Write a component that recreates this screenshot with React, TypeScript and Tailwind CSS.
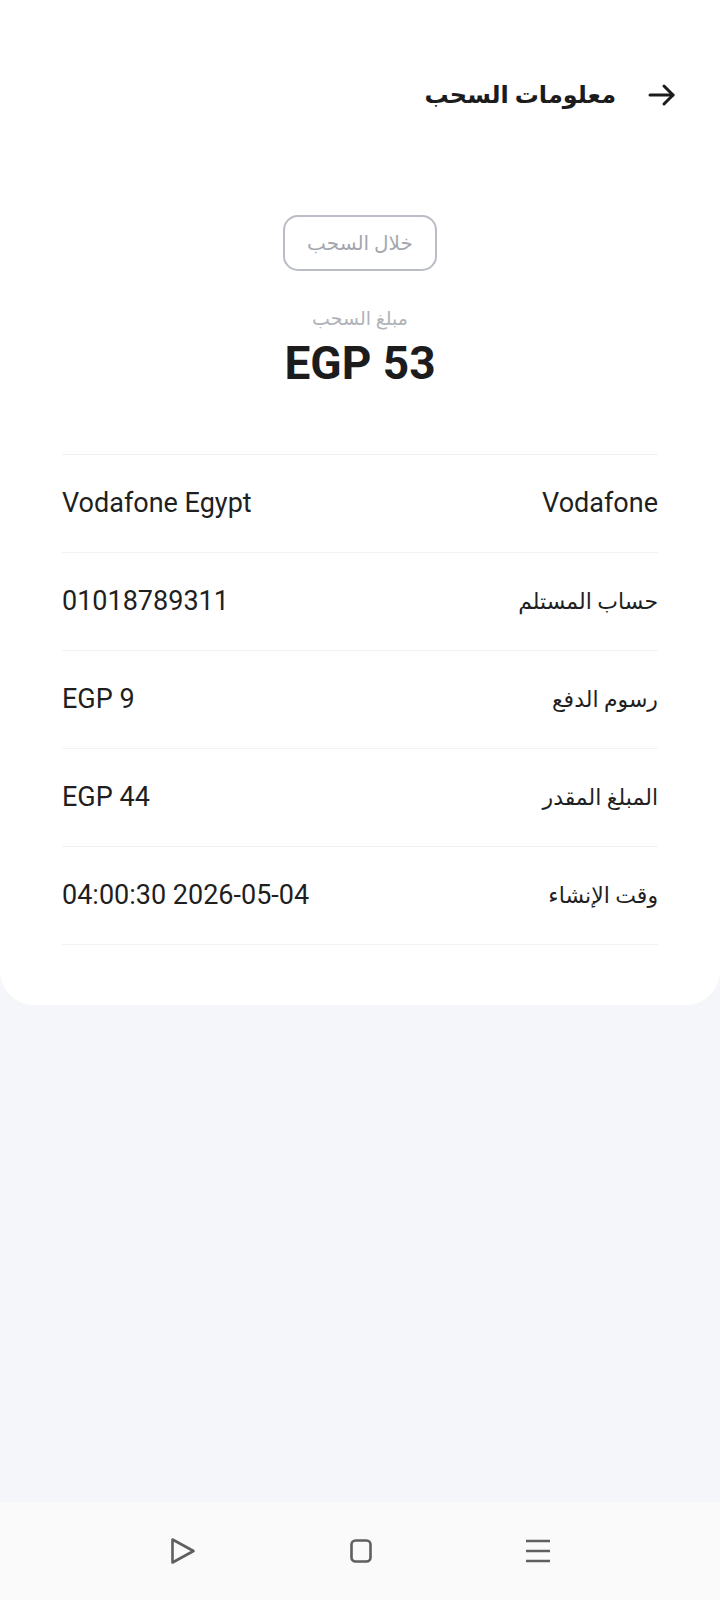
import React from "react";

const rows = [
  { label: "Vodafone", value: "Vodafone Egypt", arabic: false },
  { label: "حساب المستلم", value: "01018789311", arabic: true },
  { label: "رسوم الدفع", value: "EGP 9", arabic: true },
  { label: "المبلغ المقدر", value: "EGP 44", arabic: true },
  { label: "وقت الإنشاء", value: "04:00:30 2026-05-04", arabic: true },
];

const BackArrow = () => (
  <svg width="28" height="24" viewBox="0 0 28 24" fill="none" stroke="#1c1c1c" strokeWidth="3" strokeLinecap="round" strokeLinejoin="round">
    <path d="M2 12h23" />
    <path d="M16 3l9 9-9 9" />
  </svg>
);

const NavBar = () => (
  <div dir="ltr" className="h-[98px] bg-[#fafafa] flex items-center justify-center gap-[152px]">
    <svg width="28" height="28" viewBox="0 0 28 28" fill="none" stroke="#5f5f5f" strokeWidth="2.6" strokeLinejoin="round">
      <path d="M3.5 2.5v23l21-11.5z" />
    </svg>
    <svg width="24" height="24" viewBox="0 0 24 24" fill="none" stroke="#5f5f5f" strokeWidth="2.6">
      <rect x="2.5" y="1.5" width="19" height="21" rx="4" />
    </svg>
    <svg width="26" height="24" viewBox="0 0 26 24" fill="none" stroke="#5f5f5f" strokeWidth="2.6">
      <path d="M1 2h24M1 12h24M1 22h24" />
    </svg>
  </div>
);

export default function App() {
  return (
    <div
      dir="rtl"
      className="min-h-[1600px] bg-[#f5f6fa] flex flex-col"
      style={{ fontFamily: 'Roboto, "DejaVu Sans", sans-serif' }}
    >
      <div className="bg-white rounded-b-[34px] pb-[60px]">
        <header className="h-[190px] flex items-center gap-[32px] pr-[44px]">
          <BackArrow />
          <h1 className="text-[24px] font-bold text-[#1c1c1c]">معلومات السحب</h1>
        </header>

        <div className="flex flex-col items-center pt-[25px]">
          <div className="h-[56px] px-[22px] flex items-center rounded-[15px] border-2 border-[#babdc6] text-[20px] text-[#a4a7ae]">
            خلال السحب
          </div>
          <p className="mt-[36px] text-[19px] text-[#b0b3b9] leading-[24px]">مبلغ السحب</p>
          <p dir="ltr" className="mt-[5px] text-[46px] font-bold text-[#1c1c1c] leading-[54px]">
            EGP 53
          </p>
        </div>

        <div className="mx-[62px] mt-[64px] border-t border-[#f2f2f4]">
          {rows.map((row) => (
            <div key={row.label} className="h-[98px] flex items-center justify-between border-b border-[#f2f2f4] text-[#1f1f1f]">
              <span className={row.arabic ? "text-[22px]" : "text-[27px]"}>{row.label}</span>
              <span dir="ltr" className="text-[27px]">{row.value}</span>
            </div>
          ))}
        </div>
      </div>

      <div className="flex-1" />
      <NavBar />
    </div>
  );
}
